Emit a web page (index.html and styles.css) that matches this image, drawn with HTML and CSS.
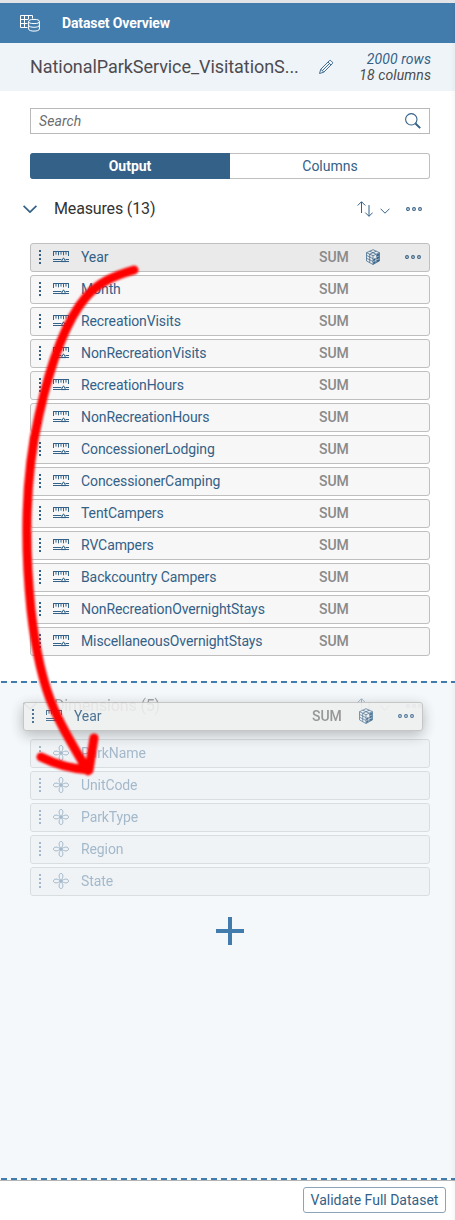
FILE: index.html
```html
<!DOCTYPE html>
<html lang="en">
<head>
<meta charset="utf-8">
<title>Dataset Overview</title>
<link rel="stylesheet" href="styles.css">
</head>
<body>
<svg class="defs" aria-hidden="true">
  <symbol id="grip" viewBox="0 0 4 16"><path d="M1 1h2v2H1zM1 5h2v2H1zM1 9h2v2H1zM1 13h2v2H1z" fill="currentColor"/></symbol>
  <symbol id="measure" viewBox="0 0 16 16"><path d="M0 2.500h16M.5 2v5M3 2v3.600M5.500 2v4.300M8 2v3.600M10.500 2v4.300M13 2v3.600M15.500 2v5M0 10.500h8.500M12.500 10.500H16M0 12.500h16" fill="none" stroke="currentColor"/><path d="M8.300 12.600l2.200-3.800 2.200 3.800z" fill="none" stroke="currentColor"/></symbol>
  <symbol id="dim" viewBox="0 0 16 16"><g fill="none" stroke="currentColor"><path d="M8 7.500C5.500 5 5.400.5 8 .5s2.500 4.500 0 7z"/><path d="M8 8.500c-2.500 2.500-2.600 7 0 7s2.500-4.500 0-7zM7.500 8C5 5.500.5 5.400.5 8s4.500 2.500 7 0zM8.500 8c2.500-2.500 7-2.600 7 0s-4.500 2.500-7 0z"/></g><circle cx="8" cy="8" r="1.700" fill="currentColor"/></symbol>
  <symbol id="cube" viewBox="0 0 16 16"><path d="M8 .7l6.500 3v8.200L8 15.500l-6.500-3.600V3.700zM1.500 3.700L8 6.700l6.500-3M8 6.700v8.800M4.700 5.200v8.500M1.500 6.400L8 9.600M1.500 9.200L8 12.500M4.700 2.200l6.500 3M11.300 2.200l-6.500 3" fill="none" stroke="currentColor" stroke-width=".7"/><path d="M8.300 10l2.300-1.100v2.300L8.300 12.300zM11.300 5.700l3-1.400v2.200l-3 1.400zM11.300 8.500l3-1.400v2.200l-3 1.400zM8.300 12.900l2.300-1.200V14l-2.300 1.200zM11.300 11.300l3-1.400v2.200l-3 1.500z" fill="currentColor"/></symbol>
  <symbol id="more" viewBox="0 0 16 6"><g fill="none" stroke="currentColor" stroke-width="1.100"><circle cx="2" cy="3" r="1.400"/><circle cx="8" cy="3" r="1.400"/><circle cx="14" cy="3" r="1.400"/></g></symbol>
  <symbol id="sort" viewBox="0 0 16 16"><path d="M4.500 12V1M.7 4.500l3.800-3.800 3.800 3.800M12 4v11.200M8.300 11.600l3.700 3.700 3.700-3.700" fill="none" stroke="currentColor"/></symbol>
  <symbol id="chev" viewBox="0 0 10 6"><path d="M.5.7L5 5.200 9.500.7" fill="none" stroke="currentColor"/></symbol>
</svg>
<div class="panel">
  <header class="titlebar">
    <svg class="dataset-icon" viewBox="0 0 20 17"><g fill="none" stroke="currentColor"><path d="M7.500 12.500H.5V.5h12v3M.5 4.500h7.500M.5 8.500h7M4.500.5v12M8.500.5v4"/><ellipse cx="14" cy="6.500" rx="5.400" ry="2.100"/><path d="M8.600 6.500v7.500c0 2.800 10.800 2.800 10.800 0V6.500M8.600 10.200c0 2.800 10.800 2.800 10.800 0"/></g></svg>
    <h1>Dataset Overview</h1>
  </header>
  <section class="subhead">
    <div class="name">NationalParkService_VisitationS...</div>
    <svg class="pencil" viewBox="0 0 16 16"><path d="M1.500 14.500l1.300-4.300L11.300 1.700q.8-.8 1.600 0l1.400 1.400q.8.8 0 1.600L5.800 13.200zM2.800 10.200l3 3M10 3l3 3M4.300 11.700l6.900-6.900" fill="none" stroke="currentColor" stroke-width=".9"/></svg>
    <div class="counts"><span class="rows">2000 rows</span><span>18 columns</span></div>
  </section>
  <main class="measures">
    <div class="search"><span>Search</span><svg viewBox="0 0 16 16"><circle cx="6.300" cy="6.300" r="5.700" fill="none" stroke="currentColor" stroke-width="1.100"/><path d="M10.500 10.500l4.700 4.700" stroke="currentColor" stroke-width="1.900"/></svg></div>
    <div class="tabs"><div class="tab active">Output</div><div class="tab">Columns</div></div>
    <div class="group-head">
      <svg class="toggle" viewBox="0 0 14 8"><path d="M.6.800L7 7.100 13.400.800" fill="none" stroke="currentColor" stroke-width="1.700"/></svg>
      <h2>Measures (13)</h2>
      <svg class="sort"><use href="#sort"/></svg><svg class="chev"><use href="#chev"/></svg><svg class="more"><use href="#more"/></svg>
    </div>
    <div class="list" id="measure-list"></div>
  </main>
  <section class="dropzone">
    <div class="faded">
      <div class="group-head">
        <svg class="toggle" viewBox="0 0 14 8"><path d="M.6.800L7 7.100 13.400.800" fill="none" stroke="currentColor" stroke-width="1.700"/></svg>
        <h2>Dimensions (5)</h2>
        <svg class="sort"><use href="#sort"/></svg><svg class="chev"><use href="#chev"/></svg><svg class="more"><use href="#more"/></svg>
      </div>
      <div class="list" id="dimension-list"></div>
    </div>
    <div class="plus"></div>
    <svg class="dash dash-top"><line x1="-9" x2="460" y1="1" y2="1"/></svg>
    <svg class="dash dash-bottom"><line x1="-9" x2="460" y1="1" y2="1"/></svg>
    <div class="row dragged"><svg class="grip"><use href="#grip"/></svg><svg class="kind"><use href="#measure"/></svg><span class="label">Year</span><span class="agg">SUM</span><svg class="cube"><use href="#cube"/></svg><svg class="more"><use href="#more"/></svg></div>
  </section>
  <footer><button>Validate Full Dataset</button></footer>
  <div class="edge"></div>
  <svg class="arrow" viewBox="0 0 455 1220"><path d="M134 270C113 276 98 283 86 297C62 325 47 379 39 415C25 475 24 540 31 610C36 655 43 684 54 709C64 732 76 751 88 771M41 757C57 765 73 769 89 770L94 738"/></svg>
</div>
<script src="app.js"></script>
</body>
</html>
```
FILE: styles.css
```css
* { box-sizing: border-box; }
body { margin: 0; background: #fff; font: 14px/16px Roboto, "Liberation Sans", sans-serif; color: #346187; }
h1, h2 { margin: 0; font-weight: 400; }
svg { display: block; flex: none; }
.defs { position: absolute; width: 0; height: 0; }
.panel { position: relative; width: 455px; height: 1220px; overflow: hidden; display: flex; flex-direction: column; border-top: 3px solid #e3e4e8; }
.titlebar { height: 40px; flex: none; display: flex; align-items: center; gap: 22px; padding-left: 20px; background: #427cac; color: #fff; }
.titlebar h1 { font-size: 14px; font-weight: 700; letter-spacing: -.12px; }
.dataset-icon { width: 20px; height: 17px; }
.subhead { height: 48px; flex: none; display: flex; align-items: center; padding: 0 24px 0 30px; background: #eff4f8; }
.name { width: 288px; font-size: 18px; letter-spacing: -.06px; color: #4d4b50; white-space: nowrap; }
.pencil { width: 16px; height: 16px; }
.counts { margin-left: auto; display: flex; flex-direction: column; align-items: flex-end; font-style: italic; color: #4b4b4b; }
.counts span { letter-spacing: .1px; }
.counts .rows { color: #346187; }
.measures { height: 590px; flex: none; padding: 17px 25px 0 30px; }
.search { height: 26px; border: 1px solid #b9b9b9; display: flex; align-items: center; justify-content: space-between; padding: 0 8px; font-style: italic; letter-spacing: .1px; color: #6c6c6c; }
.search svg { width: 16px; height: 16px; color: #346187; }
.tabs { height: 26px; margin-top: 19px; display: flex; }
.tab { flex: 1; display: flex; align-items: center; justify-content: center; border: 1px solid #bfbfbf; border-left: 0; border-radius: 0 3px 3px 0; padding-left: 1px; }
.tab.active { background: #346187; border-color: #346187; color: #fff; font-weight: 700; border-radius: 3px 0 0 3px; }
.group-head { height: 20px; display: flex; align-items: center; }
.measures .group-head { margin: 20px 0 24px -7px; }
.toggle { width: 14px; height: 8px; }
.group-head h2 { flex: none; width: 320px; padding-left: 17px; font-size: 16px; line-height: 20px; letter-spacing: -.15px; color: #333; }
.sort { width: 16px; height: 16px; }
.chev { width: 10px; height: 6px; margin: 3px 0 0 7px; }
.more { width: 16px; height: 6px; }
.group-head .more { margin-left: 16px; }
.list { display: flex; flex-direction: column; gap: 3px; }
.search, .tabs, .row { width: 400px; }
.row { height: 29px; display: flex; align-items: center; padding: 0 0 1px 7px; border: 1px solid #bfbfbf; border-radius: 3px; background: #f7f7f7; }
.row.selected { background: #eaeaea; }
.grip { width: 4px; height: 16px; }
.kind { width: 16px; height: 16px; margin-left: 11px; }
.label { flex: none; width: 250px; padding-left: 12px; letter-spacing: -.1px; white-space: nowrap; }
.agg { width: 46px; color: #898989; font-weight: 500; letter-spacing: -.1px; }
.cube { width: 16px; height: 16px; }
.row .more { margin-left: 24px; }
.dropzone { position: relative; height: 500px; flex: none; padding: 15px 25px 0 30px; background: #f4f8fb; border-bottom: 1px solid #b5b5b5; }
.faded { opacity: .42; }
.faded .group-head { margin: 0 0 23px -7px; }
.faded .row { background: #ebeef1; border-color: #b3b8bb; }
.plus { width: 28px; height: 28px; margin: 21px 0 0 186px; background: linear-gradient(#427cac, #427cac) center/28px 4px no-repeat, linear-gradient(#427cac, #427cac) center/4px 28px no-repeat; }
.dash { position: absolute; left: 0; width: 455px; height: 2px; }
.dash line { stroke: #427cac; stroke-width: 2; stroke-dasharray: 6 4; }
.dash-top { top: 0; }
.dash-bottom { bottom: 0; }
.dragged { position: absolute; left: 23px; top: 21px; background: #efefef; opacity: .87; box-shadow: 0 4px 14px rgba(0,0,0,.3); }
footer { flex: 1; display: flex; justify-content: flex-end; align-items: flex-start; padding: 6px 9px 0 0; }
footer button { width: 143px; height: 26px; padding: 0; font: 14px/16px Roboto, sans-serif; color: #346187; border: 1px solid #8ba4ba; border-radius: 3px; background: #fff; white-space: nowrap; }
.edge { position: absolute; right: 0; top: 0; width: 5px; height: 100%; background: linear-gradient(90deg, transparent, rgba(0,0,0,.03)); }
.arrow { position: absolute; left: 0; top: -3px; width: 455px; height: 1220px; fill: none; stroke: #fe0000; stroke-width: 9; stroke-linecap: round; stroke-linejoin: round; filter: blur(1px); }
```
FILE: app.js
```js
const measures = ["Year", "Month", "RecreationVisits", "NonRecreationVisits", "RecreationHours", "NonRecreationHours", "ConcessionerLodging", "ConcessionerCamping", "TentCampers", "RVCampers", "Backcountry Campers", "NonRecreationOvernightStays", "MiscellaneousOvernightStays"];
const dimensions = ["ParkName", "UnitCode", "ParkType", "Region", "State"];
const icon = (cls, id) => `<svg class="${cls}"><use href="#${id}"/></svg>`;
const start = (id, name) => icon("grip", "grip") + icon("kind", id) + `<span class="label">${name}</span>`;

document.getElementById("measure-list").innerHTML = measures.map((name, i) =>
  `<div class="row${i ? "" : " selected"}">${start("measure", name)}<span class="agg">SUM</span>${i ? "" : icon("cube", "cube") + icon("more", "more")}</div>`).join("");
document.getElementById("dimension-list").innerHTML = dimensions.map(name =>
  `<div class="row">${start("dim", name)}</div>`).join("");
```
